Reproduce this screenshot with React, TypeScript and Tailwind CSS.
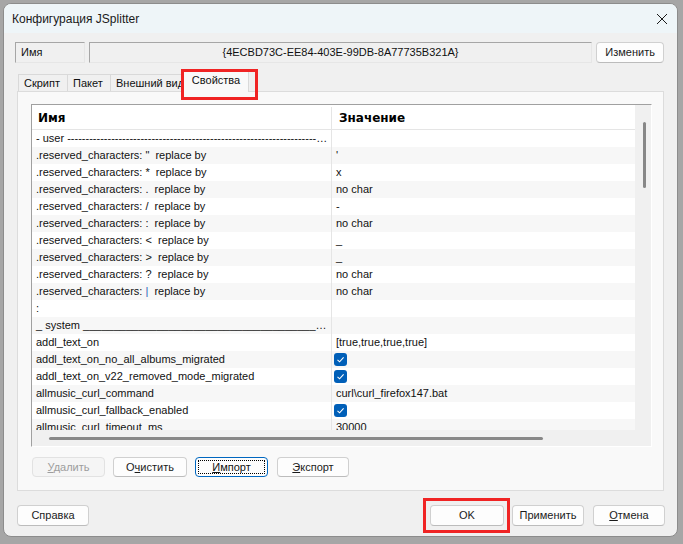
import React from 'react';

type Row = { name: React.ReactNode; value?: React.ReactNode; check?: boolean };

const Check = () => (
  <span className="inline-flex h-[13px] w-[13px] items-center justify-center rounded-[3px] bg-[#005fb8] align-middle">
    <svg width="9" height="9" viewBox="0 0 9 9">
      <path d="M1.5 4.8 L3.6 6.8 L7.6 2.4" fill="none" stroke="#fff" strokeWidth="1.1" />
    </svg>
  </span>
);

const rc = (ch: React.ReactNode) => (
  <>
    .reserved_characters: {ch}&nbsp; replace by
  </>
);

const rows: Row[] = [
  { name: '- user ' + '-'.repeat(160) },
  { name: rc('"'), value: "'" },
  { name: rc('*'), value: 'x' },
  { name: rc('.'), value: 'no char' },
  { name: rc('/'), value: '-' },
  { name: rc(':'), value: 'no char' },
  { name: rc('<'), value: '_' },
  { name: rc('>'), value: '_' },
  { name: rc('?'), value: 'no char' },
  { name: rc(<span className="text-[#2a63b8]">|</span>), value: 'no char' },
  { name: ':' },
  { name: '_ system ' + '_'.repeat(120) },
  { name: 'addl_text_on', value: '[true,true,true,true]' },
  { name: 'addl_text_on_no_all_albums_migrated', check: true },
  { name: 'addl_text_on_v22_removed_mode_migrated', check: true },
  { name: 'allmusic_curl_command', value: 'curl\\curl_firefox147.bat' },
  { name: 'allmusic_curl_fallback_enabled', check: true },
  { name: 'allmusic_curl_timeout_ms', value: '30000' },
];

const Btn = ({ children, className = '', disabled = false }: { children: React.ReactNode; className?: string; disabled?: boolean }) => (
  <div
    className={
      'flex items-center justify-center rounded-[4px] border ' +
      (disabled
        ? 'border-[#e2e2e2] bg-[#f5f5f5] text-[#9d9d9d] '
        : 'border-[#d0d0d0] border-b-[#bcbcbc] bg-[#fdfdfd] text-[#1b1b1b] ') +
      className
    }
  >
    {children}
  </div>
);

const Tab = ({ label, w }: { label: string; w: string }) => (
  <div className={'flex h-[17px] items-center overflow-hidden whitespace-nowrap border-t border-l border-[#d9d9d9] bg-[#f0f0f0] pl-[5px] ' + w}>
    {label}
  </div>
);

export default function App() {
  return (
    <div className="h-[544px] w-[683px] overflow-hidden bg-[#a6a6a6] pt-[3px] pl-[3px] pr-[5px] pb-[7px] font-['Liberation_Sans',Arial,sans-serif] text-[11px] text-[#111]">
      <div className="flex h-[534px] w-[675px] flex-col overflow-hidden rounded-[8px] border border-[#8c8c8c] bg-[#f0f0f0]">
        {/* title bar */}
        <div className="flex h-[29px] shrink-0 items-center justify-between bg-[#eef5f8] pl-[8px] pr-[9px]">
          <span className="text-[12px] text-[#1a1a1a]">Конфигурация JSplitter</span>
          <svg width="12" height="12" viewBox="0 0 12 12">
            <path d="M1 1 L11 11 M11 1 L1 11" stroke="#1a1a1a" strokeWidth="1" />
          </svg>
        </div>

        <div className="flex flex-col px-[13px]">
          {/* name row */}
          <div className="-ml-[2px] mt-[9px] flex h-[21px]">
            <div className="flex w-[70px] items-center border border-[#a6a6a6] border-b-[#e6e6e6] border-r-[#e6e6e6] pl-[5px]">Имя</div>
            <div className="ml-[4px] flex w-[505px] items-center justify-center border border-[#a6a6a6] border-b-[#e6e6e6] border-r-[#e6e6e6] bg-[#f0f0f0]">
              {'{4ECBD73C-EE84-403E-99DB-8A77735B321A}'}
            </div>
            <Btn className="ml-[4px] w-[68px]">Изменить</Btn>
          </div>

          {/* tabs */}
          <div className="mt-[7px] flex h-[21px] items-end pl-px">
            <Tab label="Скрипт" w="w-[49px]" />
            <Tab label="Пакет" w="w-[43px]" />
            <Tab label="Внешний вид" w="w-[73px]" />
            <div className="relative -mb-px flex h-[22px] w-[66px] items-center justify-center border-x border-t border-[#d9d9d9] bg-[#f9f9f9] pb-[2px] z-10">
              Свойства
              <div className="pointer-events-none absolute -left-[3px] -top-[2px] h-[31px] w-[77px] border-[3px] border-[#f02424]" />
            </div>
          </div>

          {/* tab page */}
          <div className="flex h-[400px] flex-col border border-[#dcdcdc] bg-[#f9f9f9] pt-[12px] pl-[13px] pr-[11px]">
            <div className="flex h-[343px] flex-col border border-[#a0a0a0] border-b-white border-r-white">
              <div className="flex h-[325px]">
                <div className="flex w-[606px] flex-col bg-white">
                  <div className="flex h-[25px] shrink-0 border-b border-[#e5e5e5] pt-[2px] font-['DejaVu_Sans',sans-serif] text-[12px] font-bold text-black">
                    <div className="flex w-[300px] items-center border-r border-[#e5e5e5] pl-[6px]">Имя</div>
                    <div className="flex flex-1 items-center pl-[7px]">Значение</div>
                  </div>
                  <div className="h-[300px] overflow-hidden">
                    {rows.map((r, i) => (
                      <div key={i} className={'flex h-[17px] leading-[17px] ' + (i % 2 === 1 ? 'bg-[#f7f7f7]' : 'bg-white')}>
                        <div className="w-[300px] shrink-0 overflow-hidden text-ellipsis whitespace-nowrap border-r border-[#e5e5e5] pl-[4px] pr-[3px]">
                          {r.name}
                        </div>
                        <div className="flex flex-1 items-center whitespace-nowrap pl-[2px]">
                          {r.check ? <Check /> : <span className="pl-[2px]">{r.value}</span>}
                        </div>
                      </div>
                    ))}
                  </div>
                </div>
                <div className="w-[16px] bg-[#f0f0f0] pt-[17px] pl-[8px]">
                  <div className="h-[66px] w-[3px] rounded-full bg-[#878787]" />
                </div>
              </div>
              <div className="flex h-[16px] items-center bg-[#f0f0f0] pl-[17px]">
                <div className="h-[3px] w-[494px] rounded-full bg-[#878787]" />
              </div>
            </div>

            <div className="mt-[10px] flex h-[20px]">
              <Btn disabled className="ml-px w-[73px]">
                <span><u>У</u>далить</span>
              </Btn>
              <Btn className="ml-[8px] w-[74px]">
                <span>О<u>ч</u>истить</span>
              </Btn>
              <div className="ml-[8px] flex w-[73px] rounded-[4px] border border-[#0067c0] bg-[#fdfdfd] p-[2px]">
                <div className="flex flex-1 items-center justify-center border border-dotted border-black">
                  <span><u>И</u>мпорт</span>
                </div>
              </div>
              <Btn className="ml-[9px] w-[72px]">
                <span><u>Э</u>кспорт</span>
              </Btn>
            </div>
          </div>

          {/* dialog buttons */}
          <div className="-mr-px mt-[14px] flex h-[21px]">
            <Btn className="w-[72px]">Справка</Btn>
            <div className="flex-1" />
            <div className="relative flex">
              <Btn className="w-[74px]">OK</Btn>
              <div className="pointer-events-none absolute -left-[7px] -top-[7px] h-[35px] w-[87px] border-[3px] border-[#f02424]" />
            </div>
            <Btn className="ml-[8px] w-[72px]">Применить</Btn>
            <Btn className="ml-[9px] w-[72px]">
              <span><u>О</u>тмена</span>
            </Btn>
          </div>
        </div>
      </div>
    </div>
  );
}
